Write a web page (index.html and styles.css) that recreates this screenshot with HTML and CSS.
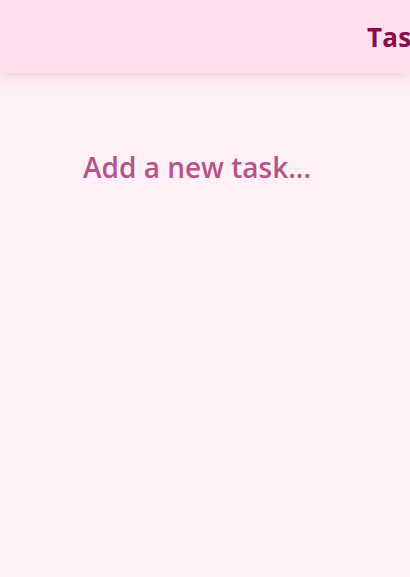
FILE: index.html
```html
<!DOCTYPE html>
<html lang="en">
<head>
<meta charset="utf-8">
<title>Tasks</title>
<link rel="stylesheet" href="styles.css">
</head>
<body>
<header class="topbar">
  <h1 class="title">Task Manager</h1>
</header>
<main class="content">
  <form class="task-form">
    <input class="task-input" type="text" placeholder="Add a new task...">
  </form>
</main>
</body>
</html>
```
FILE: styles.css
```css
* { box-sizing: border-box; }
html, body { margin: 0; padding: 0; }
body {
  background: #fff0f5;
  font-family: "Open Sans", "Liberation Sans", sans-serif;
  width: 410px;
  height: 577px;
  overflow: hidden;
}
.topbar {
  height: 73px;
  background: #ffdfee;
  box-shadow: 0 3px 12px rgba(190, 110, 140, 0.28);
  display: flex;
  align-items: center;
  padding-left: 367px;
  overflow: hidden;
  white-space: nowrap;
  position: relative;
  z-index: 1;
}
.title {
  margin: 0;
  font-size: 26px;
  font-weight: 700;
  color: #8a0a4a;
  letter-spacing: 0.3px;
}
.content {
  padding-top: 72px;
  padding-left: 83px;
}
.task-form { display: flex; }
.task-input {
  border: none;
  outline: none;
  background: transparent;
  font-family: inherit;
  font-size: 28px;
  font-weight: 600;
  color: #b5548a;
  padding: 0;
  width: 320px;
  height: 44px;
}
.task-input::placeholder {
  color: #b5548a;
  opacity: 1;
}
```
